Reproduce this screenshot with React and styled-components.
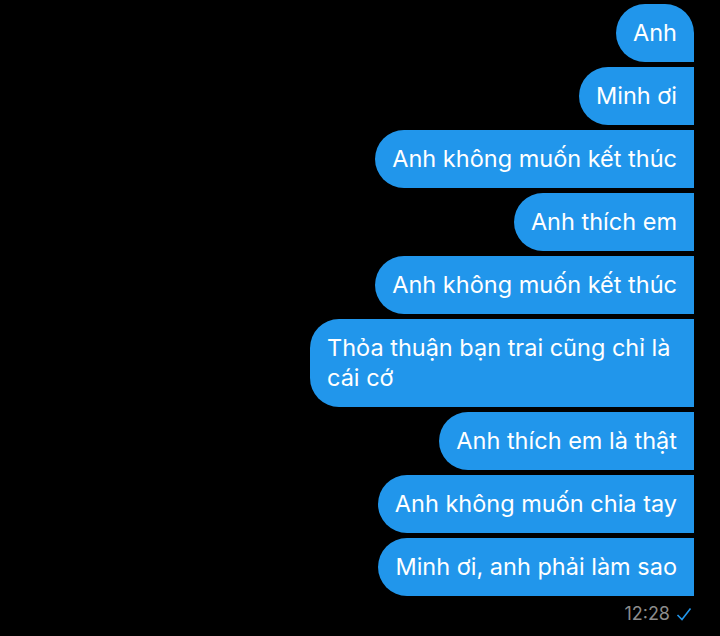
import React from "react";
import styled, { createGlobalStyle } from "styled-components";

const Global = createGlobalStyle`
  html, body {
    margin: 0;
    background: #000;
  }
  body {
    font-family: Inter, "Noto Sans", sans-serif;
  }
`;

const Thread = styled.div`
  display: flex;
  flex-direction: column;
  align-items: flex-end;
  gap: 5px;
  padding: 4px 26px 0 0;
  min-height: 636px;
  box-sizing: border-box;
`;

const Bubble = styled.div`
  background: #2196eb;
  color: #fff;
  font-size: 23.5px;
  line-height: 30px;
  padding: 14px 17px 14px 17px;
  max-width: 350px;
  border-radius: ${({ first }) => (first ? "29px 29px 0 29px" : "29px 0 0 29px")};
`;

const Meta = styled.div`
  display: flex;
  align-items: center;
  gap: 6px;
  margin-top: 2px;
  color: #8c8c8c;
  font-size: 18px;
  margin-right: 2px;
`;

const messages = [
  "Anh",
  "Minh ơi",
  "Anh không muốn kết thúc",
  "Anh thích em",
  "Anh không muốn kết thúc",
  "Thỏa thuận bạn trai cũng chỉ là cái cớ",
  "Anh thích em là thật",
  "Anh không muốn chia tay",
  "Minh ơi, anh phải làm sao",
];

export default function App() {
  return (
    <>
      <Global />
      <Thread>
        {messages.map((m, i) => (
          <Bubble key={i} first={i === 0}>
            {m}
          </Bubble>
        ))}
        <Meta>
          <span>12:28</span>
          <svg width="16" height="14" viewBox="0 0 16 14">
            <path d="M1.5 8 L6 12.5 L14.5 1.5" fill="none" stroke="#2196eb" strokeWidth="1.6" />
          </svg>
        </Meta>
      </Thread>
    </>
  );
}
